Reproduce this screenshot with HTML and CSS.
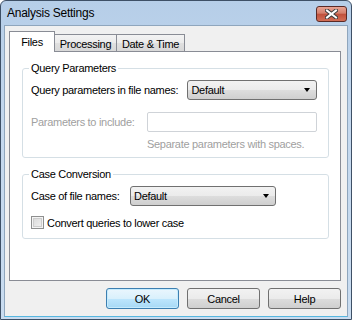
FILE: index.html
```html
<!DOCTYPE html>
<html lang="en">

<head>
  <meta charset="UTF-8">
  <meta name="viewport" content="width=device-width, initial-scale=1.0">
  <title>Analysis Settings</title>
  <link rel="stylesheet" href="styles.css">
</head>

<body>
  <div class="window">
    <div class="titlebar">
      <span class="title">Analysis Settings</span>
      <div class="close-btn">
        <svg width="13" height="10" viewBox="0 0 13 10">
          <path d="M2 1.5 L11 8.5 M11 1.5 L2 8.5" stroke="#3b3b3b" stroke-width="4" stroke-linecap="square" />
          <path d="M2 1.5 L11 8.5 M11 1.5 L2 8.5" stroke="#ffffff" stroke-width="2" stroke-linecap="square" />
        </svg>
      </div>
    </div>

    <div class="client">
      <div class="tabs">
        <div class="tab active">Files</div>
        <div class="tab tab-processing">Processing</div>
        <div class="tab tab-date">Date &amp; Time</div>
      </div>

      <div class="tab-panel">
        <fieldset class="group group-query">
          <legend>Query Parameters</legend>
          <div class="row">
            <span class="label label-query">Query parameters in file names:</span>
            <div class="dropdown dropdown-query">
              <span>Default</span>
              <span class="arrow"></span>
            </div>
          </div>
          <div class="row row-include">
            <span class="label label-include disabled">Parameters to include:</span>
            <div class="textbox disabled-box"></div>
          </div>
          <div class="hint disabled">Separate parameters with spaces.</div>
        </fieldset>

        <fieldset class="group group-case">
          <legend>Case Conversion</legend>
          <div class="row">
            <span class="label label-case">Case of file names:</span>
            <div class="dropdown dropdown-case">
              <span>Default</span>
              <span class="arrow"></span>
            </div>
          </div>
          <div class="check-row">
            <span class="checkbox"></span>
            <span>Convert queries to lower case</span>
          </div>
        </fieldset>
      </div>

      <div class="buttons">
        <div class="btn btn-default">OK</div>
        <div class="btn">Cancel</div>
        <div class="btn">Help</div>
      </div>
    </div>
  </div>
</body>

</html>
```

FILE: styles.css
```css
body {
  margin: 0;
  font-family: "Liberation Sans", Arial, sans-serif;
  font-size: 11px;
  letter-spacing: -0.3px;
  color: #000;
  background: #fff;
}

.window {
  width: 352px;
  height: 320px;
  box-sizing: border-box;
  border: 1px solid #3e5066;
  border-radius: 6px 6px 0 0;
  background: linear-gradient(to bottom, #b6cee8 0%, #c4d8ee 40%, #c9dcf0 100%);
  display: flex;
  flex-direction: column;
  overflow: hidden;
}

/* title bar */
.titlebar {
  height: 24px;
  display: flex;
  align-items: flex-start;
  padding-left: 6px;
}

.title {
  font-size: 12px;
  letter-spacing: -0.25px;
  line-height: 24px;
  flex: 1;
}

.close-btn {
  width: 31px;
  height: 16px;
  margin-top: 5px;
  margin-right: 4px;
  box-sizing: border-box;
  border: 1px solid #5a2a26;
  border-radius: 3px;
  background: linear-gradient(to bottom, #e8a493 0%, #d47f6c 45%, #c0503b 50%, #d26e56 100%);
  display: flex;
  align-items: center;
  justify-content: center;
}

.close-btn svg {
  display: block;
}

/* client area */
.client {
  flex: 1;
  margin: 0 3px 2px 3px;
  border: 1px solid #8fa6bd;
  border-bottom-color: #57b7e0;
  background: #f0f0f0;
  padding: 6px 5px 0 4px;
}

.tabs {
  display: flex;
  align-items: flex-end;
  height: 20px;
  position: relative;
  z-index: 1;
  margin-bottom: -1px;
}

.tab {
  height: 17px;
  box-sizing: border-box;
  border: 1px solid #898c95;
  border-bottom: none;
  background: linear-gradient(to bottom, #f3f3f3 0%, #ebebeb 50%, #e0e0e0 50%, #d8d8d8 100%);
  display: flex;
  align-items: center;
  justify-content: center;
  padding-top: 1px;
  margin-bottom: 1px;
}

.tab.active {
  width: 46px;
  height: 21px;
  background: #fff;
  margin-bottom: 0;
  padding-bottom: 1px;
  position: relative;
  z-index: 2;
}

.tab-processing {
  width: 63px;
  margin-left: -1px;
}

.tab-date {
  width: 69px;
  margin-left: -1px;
}

.tab-panel {
  width: 332px;
  height: 230px;
  box-sizing: border-box;
  border: 1px solid #898c95;
  background: #fff;
  padding: 10px 11px 0 12px;
}

/* group boxes */
.group {
  margin: 0;
  border: 1px solid #d5dfe5;
  border-radius: 3px;
  padding: 5px 11px 6px 8px;
  min-width: 0;
}

.group legend {
  padding: 0 2px;
  margin-left: -2px;
  line-height: 13px;
}

.group-case {
  margin-top: 10px;
  padding-bottom: 9px;
}

.row {
  display: flex;
  align-items: center;
  height: 20px;
}

.row-include {
  margin-top: 12px;
}

.label-query {
  width: 157px;
}

.label-include {
  width: 116px;
}

.label-case {
  width: 99px;
}

.disabled {
  color: #a0a0a0;
}

.dropdown {
  height: 20px;
  box-sizing: border-box;
  border: 1px solid #707070;
  border-radius: 3px;
  background: linear-gradient(to bottom, #f2f2f2 0%, #ebebeb 50%, #dddddd 50%, #cfcfcf 100%);
  display: flex;
  align-items: center;
  justify-content: space-between;
  padding: 0 6px 0 3px;
}

.dropdown-query {
  width: 130px;
}

.dropdown-case {
  width: 146px;
}

.arrow {
  width: 0;
  height: 0;
  border-left: 3.5px solid transparent;
  border-right: 3.5px solid transparent;
  border-top: 4px solid #000;
}

.textbox {
  width: 171px;
  height: 20px;
  box-sizing: border-box;
  background: #fff;
}

.disabled-box {
  border: 1px solid #cfd3d8;
  border-radius: 2px;
}

.hint {
  margin-top: 6px;
  margin-left: 116px;
  line-height: 13px;
}

.check-row {
  display: flex;
  align-items: center;
  gap: 3px;
  margin-top: 10px;
  height: 13px;
}

.checkbox {
  width: 13px;
  height: 13px;
  box-sizing: border-box;
  border: 1px solid #8e8f8f;
  background: linear-gradient(135deg, #d6d6d6 0%, #f4f4f4 100%);
  box-shadow: inset 0 0 0 1px #f4f4f4, inset 0 0 0 2px #cdcdcd;
}

/* bottom buttons */
.buttons {
  display: flex;
  justify-content: flex-end;
  gap: 8px;
  width: 332px;
  margin-top: 7px;
}

.btn {
  width: 73px;
  height: 21px;
  box-sizing: border-box;
  border: 1px solid #707070;
  border-radius: 3px;
  background: linear-gradient(to bottom, #f2f2f2 0%, #ebebeb 50%, #dddddd 50%, #cfcfcf 100%);
  display: flex;
  align-items: center;
  justify-content: center;
}

.btn-default {
  border-color: #3c7fb1;
  background: linear-gradient(to bottom, #eaf6fd 0%, #d9f0fc 50%, #bee6fd 50%, #a7d9f5 100%);
  box-shadow: inset 0 0 0 1px #c6ebfd;
}
```
